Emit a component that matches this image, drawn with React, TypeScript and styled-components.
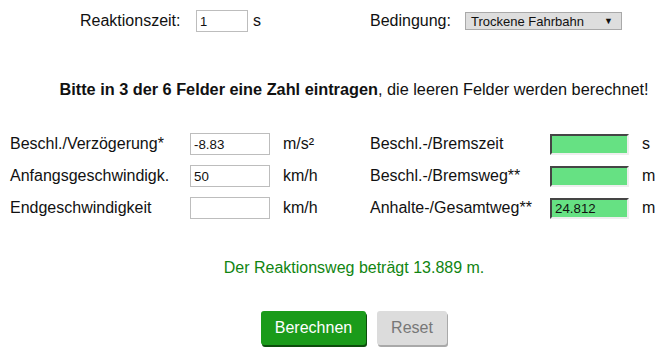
import React from 'react';
import styled, { createGlobalStyle } from 'styled-components';

const GlobalStyle = createGlobalStyle`
  html, body {
    margin: 0;
    padding: 0;
    background: #ffffff;
  }
  body {
    font-family: 'Liberation Sans', Arial, sans-serif;
    color: #111;
  }
`;

const Page = styled.div`
  width: 668px;
  height: 357px;
  overflow: hidden;
  font-size: 16px;
`;

const TopRow = styled.div`
  display: grid;
  grid-template-columns: 80px 116px 52px 122px 95px 159px;
  align-items: center;
  height: 22px;
  margin-top: 10px;
`;

const Label = styled.span`
  white-space: nowrap;
`;

const Unit = styled.span<{ indent?: number }>`
  padding-left: ${p => p.indent ?? 0}px;
  white-space: nowrap;
`;

const SmallInput = styled.input`
  box-sizing: border-box;
  width: 52px;
  height: 22px;
  border: 1px solid #bdbdbd;
  padding: 0 3px;
  font-family: 'Liberation Sans', Arial, sans-serif;
  font-size: 13px;
  color: #111;
  outline: none;
`;

const Select = styled.div`
  box-sizing: border-box;
  width: 157px;
  height: 18px;
  border: 1px solid #a9a9a9;
  background: #dedede;
  display: flex;
  align-items: center;
  justify-content: space-between;
  padding: 0 8px 0 5px;
  font-size: 13px;
  color: #111;
`;

const Arrow = styled.span`
  font-size: 9px;
`;

const Hint = styled.p`
  margin: 48px 0 0 40px;
  text-align: center;
  font-size: 16.3px;
  line-height: 18px;
`;

const Strong = styled.b`
  font-weight: bold;
`;

const FormGrid = styled.div`
  display: grid;
  grid-template-columns: 180px 80px 100px 180px 79px 39px;
  grid-auto-rows: 22px;
  row-gap: 10px;
  align-items: center;
  margin: 35px 0 0 10px;
`;

const Field = styled.input<{ computed?: boolean }>`
  box-sizing: border-box;
  width: ${p => (p.computed ? 79 : 80)}px;
  height: ${p => (p.computed ? 21 : 22)}px;
  padding: 0 3px;
  font-family: 'Liberation Sans', Arial, sans-serif;
  font-size: 13.3px;
  color: #111;
  outline: none;
  background: ${p => (p.computed ? '#66e183' : '#fff')};
  border: ${p => (p.computed ? '2px inset #eee' : '1px solid #bdbdbd')};
  border-color: ${p => (p.computed ? '#999 #eee #eee #999' : '#bdbdbd')};
`;

const Result = styled.p`
  margin: 40px 0 0 40px;
  text-align: center;
  color: #118511;
  font-size: 16px;
  line-height: 18px;
`;

const Buttons = styled.div`
  display: flex;
  justify-content: center;
  gap: 11px;
  margin: 34px 0 0 40px;
`;

const Button = styled.button<{ primary?: boolean }>`
  box-sizing: border-box;
  height: 34px;
  padding: 0 13px;
  border: none;
  border-radius: 3px;
  font-family: 'Liberation Sans', Arial, sans-serif;
  font-size: 16px;
  color: ${p => (p.primary ? '#fff' : '#777')};
  background: ${p => (p.primary ? '#1a9b1a' : '#dcdcdc')};
  box-shadow: ${p => (p.primary ? '1px 2px 0 #0c4d0c' : '1px 2px 0 #a9a9a9')};
  width: ${p => (p.primary ? 105 : 70)}px;
`;

const rows = [
  { left: 'Beschl./Verzögerung*', value: '-8.83', unit: 'm/s²', right: 'Beschl.-/Bremszeit', result: '', rUnit: 's' },
  { left: 'Anfangsgeschwindigk.', value: '50', unit: 'km/h', right: 'Beschl.-/Bremsweg**', result: '', rUnit: 'm' },
  { left: 'Endgeschwindigkeit', value: '', unit: 'km/h', right: 'Anhalte-/Gesamtweg**', result: '24.812', rUnit: 'm' },
];

export default function App() {
  return (
    <Page>
      <GlobalStyle />
      <TopRow>
        <span />
        <Label>Reaktionszeit:</Label>
        <SmallInput defaultValue="1" />
        <Unit indent={5}>s</Unit>
        <Label>Bedingung:</Label>
        <Select>
          <span>Trockene Fahrbahn</span>
          <Arrow>▼</Arrow>
        </Select>
      </TopRow>

      <Hint>
        <Strong>Bitte in 3 der 6 Felder eine Zahl eintragen</Strong>, die leeren Felder werden berechnet!
      </Hint>

      <FormGrid>
        {rows.map(r => (
          <React.Fragment key={r.left}>
            <Label>{r.left}</Label>
            <Field defaultValue={r.value} />
            <Unit indent={13}>{r.unit}</Unit>
            <Label>{r.right}</Label>
            <Field computed defaultValue={r.result} />
            <Unit indent={13}>{r.rUnit}</Unit>
          </React.Fragment>
        ))}
      </FormGrid>

      <Result>Der Reaktionsweg beträgt 13.889 m.</Result>

      <Buttons>
        <Button primary>Berechnen</Button>
        <Button>Reset</Button>
      </Buttons>
    </Page>
  );
}
